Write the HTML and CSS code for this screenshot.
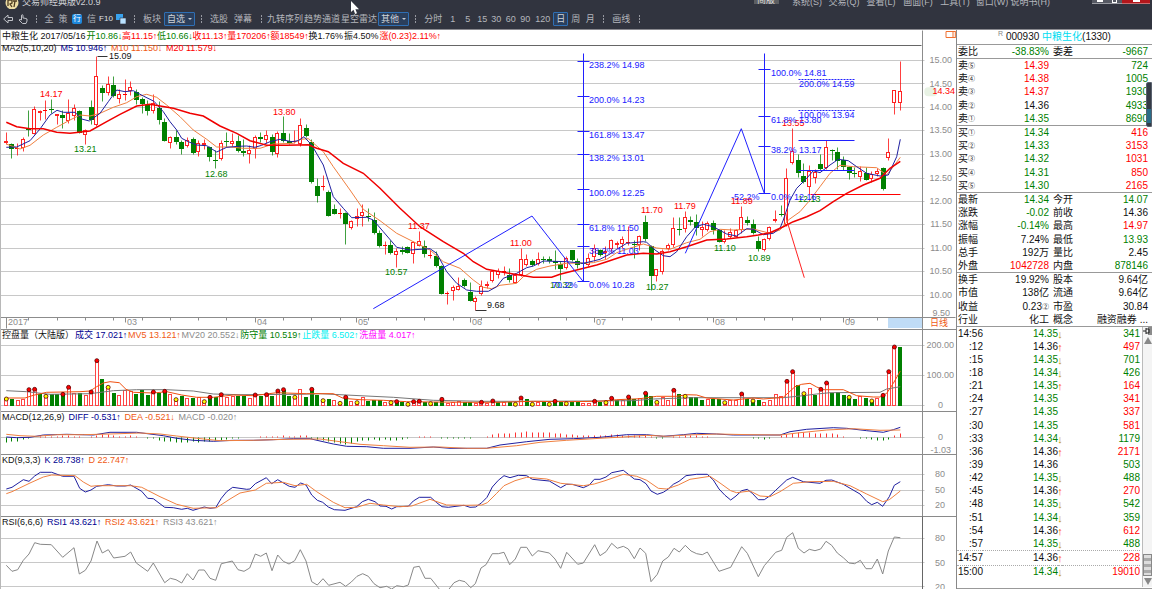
FILE: index.html
```html
<!DOCTYPE html>
<html lang="zh-CN">
<head>
<meta charset="utf-8">
<title>交易师经典版v2.0.9</title>
<link rel="stylesheet" href="styles.css">
</head>
<body>
<header class="app-header">
  <div class="titlebar">
    <svg class="logo" viewBox="0 0 14 14"><circle cx="7" cy="5" r="6.5" fill="#ecdca4"/><path d="M3 2h4v3l-2 1 2 3M8 3h4M10 3L9 9M3 2v6" stroke="#4b3a20" stroke-width="1.3" fill="none"/></svg>
    <h1 class="app-name">交易师经典版v2.0.9</h1>
    <nav class="menu">
      <span class="menu-chip">简版</span>
      <button>系统(S)</button><button>交易(Q)</button><button>查看(L)</button><button>画面(F)</button><button>工具(T)</button><button>窗口(W)</button><button>说明书(H)</button>
    </nav>
    <div class="window-buttons">
      <button class="win" aria-label="最小化"><span class="glyph-min"></span></button><button class="win" aria-label="还原"><span class="glyph-max"></span></button><button class="win win-close" aria-label="关闭"><span class="glyph-close"></span></button>
    </div>
  </div>
  <div class="toolbar">
    <button class="cell wide" aria-label="后退"><svg viewBox="0 0 10 10" width="10" height="10"><path d="M9.5 3.5H5V1L.7 5 5 9V6.5h4.500z" class="stroke"/></svg></button>
    <button class="cell wide" aria-label="手形"><svg viewBox="0 0 10 10" width="10" height="10"><path d="M3.500 6V1.200q.8-.9 1.500 0V4q2.200.1 4 1v2L8 9.500H4.500L1 6q.7-1.100 2.500 0" class="stroke"/></svg></button>
    <i class="sep"></i>
    <button class="cell">全</button><button class="cell">策</button><button class="cell"><span class="badge">行</span></button><button class="cell wide">信</button><button class="cell f10">F10</button>
    <button class="cell wide" aria-label="窗口布局"><svg viewBox="0 0 10 10" width="10" height="10"><path d="M0 0h7v6H0z" fill="#38a2ee"/><path d="M4 4h6v6H4z" fill="#b9e2ff" stroke="#31343f" stroke-width=".6"/></svg></button>
    <i class="sep"></i>
    <button class="tool">板块</button><button class="drop">自选<b></b></button>
    <i class="sep"></i>
    <button class="tool">选股</button><button class="tool">弹幕</button>
    <i class="sep"></i>
    <button class="tool long">九转序列</button><button class="tool long">趋势通道</button><button class="tool long">星空雷达</button><button class="drop">其他<b></b></button>
    <i class="sep"></i>
    <button class="tool">分时</button><button class="cell wide">1</button><button class="cell wide">5</button><button class="cell">15</button><button class="cell">30</button><button class="cell wide">60</button><button class="cell">90</button><button class="tool">120</button><button class="cell wide active">日</button><button class="cell wide">周</button><button class="cell">月</button>
    <i class="sep"></i>
    <button class="tool">画线</button>
    <i class="sep"></i>
  </div>
  <svg class="pointer" viewBox="0 0 8 13"><path d="M0 0v11l2.500-2.200L4.200 13l1.800-.8L4.400 8.200H8z" fill="#fff"/></svg>
</header>

<main class="workspace">
  <div class="charts">
    <section class="panel" data-chart="price">
      <svg></svg>
      <div class="captions">
        <p class="caption tight"><span class="blk">中粮生化 2017/05/16 </span><span class="grn">开10.86<i>↓</i></span><span class="red">高11.15<i>↑</i></span><span class="grn">低10.66<i>↓</i></span><span class="red">收11.13<i>↑</i></span><span class="red">量170206<i>↑</i></span><span class="red">额18549<i>↑</i></span><span class="blk">换1.76%</span><span class="blk">振4.50%</span><span class="red">涨(0.23)2.11%<i>↑</i></span></p>
        <p class="caption"><span class="blk">MA2(5,10,20)</span><span class="navy">M5 10.946<i>↑</i></span><span class="org">M10 11.150<i>↓</i></span><span class="red">M20 11.579<i>↓</i></span></p>
      </div>
    </section>
    <section class="panel" data-chart="volume">
      <svg></svg>
      <p class="caption snug"><span class="blk">控盘量（大陆版）</span><span class="navy">成交 17.021<i>↑</i></span><span class="org">MV5 13.121<i>↑</i></span><span class="gry">MV20 20.552<i>↓</i></span><span class="grn">防守量 10.519<i>↑</i></span><span class="cyan">止跌量 6.502<i>↑</i></span><span class="mag">洗盘量 4.017<i>↑</i></span></p>
    </section>
    <section class="panel" data-chart="macd">
      <svg></svg>
      <p class="caption"><span class="blk">MACD(12,26,9)</span><span class="navy">DIFF -0.531<i>↑</i></span><span class="org">DEA -0.521<i>↓</i></span><span class="gry">MACD -0.020<i>↑</i></span></p>
    </section>
    <section class="panel" data-chart="kd">
      <svg></svg>
      <p class="caption"><span class="blk">KD(9,3,3)</span><span class="navy">K 28.738<i>↑</i></span><span class="org">D 22.747<i>↑</i></span></p>
    </section>
    <section class="panel" data-chart="rsi">
      <svg></svg>
      <p class="caption"><span class="blk">RSI(6,6,6)</span><span class="navy">RSI1 43.621<i>↑</i></span><span class="org">RSI2 43.621<i>↑</i></span><span class="gry">RSI3 43.621<i>↑</i></span></p>
    </section>
  </div>

  <aside class="quote">
    <h2 class="stock"><sup>R</sup> 000930 <span class="cyan2">中粮生化</span>(1330)</h2>
    <table class="grid-table first"><tr><th>委比</th><td class="grn">-38.83%</td><th>委差</th><td class="grn">-9667</td></tr></table>
    <table class="grid-table book">
      <tr><th>卖<small>⑤</small></th><td class="red">14.39</td><th></th><td class="grn">724</td></tr>
      <tr><th>卖<small>④</small></th><td class="red">14.38</td><th></th><td class="grn">1005</td></tr>
      <tr><th>卖<small>③</small></th><td class="red">14.37</td><th></th><td class="grn">1930</td></tr>
      <tr><th>卖<small>②</small></th><td>14.36</td><th></th><td class="grn">4933</td></tr>
      <tr><th>卖<small>①</small></th><td class="grn">14.35</td><th></th><td class="grn">8690</td></tr>
    </table>
    <table class="grid-table book">
      <tr><th>买<small>①</small></th><td class="grn">14.34</td><th></th><td class="red">416</td></tr>
      <tr><th>买<small>②</small></th><td class="grn">14.33</td><th></th><td class="red">3153</td></tr>
      <tr><th>买<small>③</small></th><td class="grn">14.32</td><th></th><td class="red">1031</td></tr>
      <tr><th>买<small>④</small></th><td class="grn">14.31</td><th></th><td class="red">850</td></tr>
      <tr><th>买<small>⑤</small></th><td class="grn">14.30</td><th></th><td class="red">2165</td></tr>
    </table>
    <table class="grid-table stats">
      <tr><th>最新</th><td class="grn">14.34</td><th>今开</th><td class="grn">14.07</td></tr>
      <tr><th>涨跌</th><td class="grn">-0.02</td><th>前收</th><td>14.36</td></tr>
      <tr><th>涨幅</th><td class="grn">-0.14%</td><th>最高</th><td class="red">14.97</td></tr>
      <tr><th>振幅</th><td>7.24%</td><th>最低</th><td class="grn">13.93</td></tr>
      <tr><th>总手</th><td>192万</td><th>量比</th><td>2.45</td></tr>
      <tr><th>外盘</th><td class="red">1042728</td><th>内盘</th><td class="grn">878146</td></tr>
    </table>
    <table class="grid-table profile">
      <tr><th>换手</th><td>19.92%</td><th>股本</th><td>9.64亿</td></tr>
      <tr><th>市值</th><td>138亿</td><th>流通</th><td>9.64亿</td></tr>
      <tr><th>收益</th><td>0.23<small>②</small></td><th>市盈</th><td>30.84</td></tr>
      <tr><th>行业</th><td>化工</td><th>概念</th><td>融资融券 ...</td></tr>
    </table>
    <div class="ticks">
      <table class="tick-table"><tbody id="ticks"></tbody></table>
      <div class="scroll">
        <svg viewBox="0 0 9 8" class="pin"><path d="M0 4h3M3 1v6M3 2h3v4H3M6 0v8M8 0v8" stroke="#222" fill="none"/></svg>
        <span class="up"></span><span class="track"></span><span class="thumb"></span><span class="down"></span>
      </div>
    </div>
    <div class="dock"></div>
  </aside>
</main>
<script src="chart.js"></script>
</body>
</html>
```
FILE: styles.css
```css
* { box-sizing: border-box; }
html, body { height: 100%; margin: 0; }
body {
  display: flex;
  flex-direction: column;
  overflow: hidden;
  background: #fff;
  color: #111;
  font-family: "Liberation Sans", "Noto Sans CJK SC", sans-serif;
  font-size: 9px;
}
h1, h2, p { margin: 0; font-size: inherit; font-weight: normal; }
button { padding: 0; border: 0; background: none; color: inherit; font: inherit; white-space: nowrap; }

.red { color: #f00; }
.grn { color: #008000; }
.blk { color: #111; }
.navy { color: #000090; }
.org { color: #f05a14; }
.gry { color: #8c8c8c; }
.cyan { color: #00f0f0; }
.cyan2 { color: #00dcf0; }
.mag { color: #f0f; }

/* header */
.app-header {
  position: relative;
  flex: none;
  background: #31343f;
  border-bottom: 1px solid #8a8a90;
  color: #b4b6bc;
}
.titlebar { display: flex; align-items: flex-start; height: 9px; overflow: hidden; line-height: 4px; }
.logo { width: 14px; height: 14px; margin-left: 5px; margin-top: -2px; }
.app-name { margin-left: 3px; color: #d0d2d6; }
.menu { display: flex; margin-left: auto; }
.menu button { min-width: 37px; line-height: 2px; }
.menu-chip { width: 25px; height: 4px; margin-right: 10px; overflow: hidden; background: #5c5e62; color: #ddd; text-align: center; line-height: 1px; }
.window-buttons { display: flex; margin-left: 42px; margin-right: 2px; }
.win { display: grid; place-items: start center; width: 15px; height: 4px; background: #565963; border-bottom: 1px solid #9a9ca3; }
.win-close { width: 28px; background: #b3161b; border-color: #c96c6e; }
.glyph-min { width: 6px; height: 2px; background: #fff; }
.glyph-max { width: 5px; height: 3px; border: 1px solid #fff; border-top: 0; }
.glyph-close { width: 7px; height: 2px; background: #fff; }
.toolbar { display: flex; align-items: center; height: 20px; padding-bottom: 1px; line-height: 12px; }
.cell { display: grid; place-items: center; flex: none; width: 14px; height: 14px; }
.cell.wide { width: 15px; }
.tool { flex: none; padding: 0 3px; }
.tool.long { padding: 0 1px 0 0; }
.f10 { color: #e0e2e6; font-size: 8px; }
.sep { flex: none; width: 12px; height: 8px; background: repeating-linear-gradient(#9698a0 0 2px, transparent 2px 3px) center / 1px 8px no-repeat; }
.badge { width: 10px; height: 10px; border-radius: 2px; background: #1e88dc; color: #fff; font-size: 8px; line-height: 10px; }
.active, .drop { border: 1px solid #2f6fb4; border-radius: 1px; background: #2b3f5c; color: #d0d4da; }
.drop { display: flex; flex: none; align-items: center; gap: 3px; height: 14px; padding: 0 2px; }
.drop b { width: 4px; border: 2px solid transparent; border-top-color: #c8ccd2; border-bottom: 0; }
.stroke { fill: none; stroke: #c0c2c8; stroke-width: 1; }
.pointer { position: absolute; left: 30.5%; top: 1px; width: 8px; height: 13px; }

/* workspace */
.workspace { display: grid; grid-template-columns: minmax(0, 1fr) 196px; flex: 1; min-height: 0; }
.charts { display: grid; grid-template-rows: 299fr 82fr 43fr 62fr 73fr; min-height: 0; border-left: 1px solid #b8b8b8; }
.panel { display: grid; min-height: 0; box-shadow: inset 0 1px #8a8a8a; }
.panel:first-child { box-shadow: none; }
.panel > * { grid-area: 1 / 1; min-height: 0; }
.panel svg { width: 100%; height: 100%; overflow: hidden; }
.panel text { font-size: 9px; dominant-baseline: central; }
.caption { display: flex; gap: 4px; align-self: start; padding-left: 1px; line-height: 12px; white-space: nowrap; }
.caption.tight { gap: 0; }
.caption.tight .blk { margin-right: 1px; }
.caption.snug { gap: 1px; }
.caption i { display: inline-flex; justify-content: center; width: 4px; font-style: normal; }

/* quote board */
.quote { position: relative; display: flex; flex-direction: column; min-height: 0; border-left: 1px solid #888; font-size: 10px; line-height: 13px; }
.stock { height: 15px; text-align: center; border-bottom: 1px solid #999; }
.stock sup { color: #888; font-size: 7px; line-height: 1px; }
.grid-table { width: 100%; table-layout: fixed; border-collapse: collapse; border-bottom: 1px solid #999; }
.grid-table th, .grid-table td { height: 13px; padding: 0; font-weight: normal; line-height: 13px; white-space: nowrap; }
.grid-table th { width: 26px; padding-left: 1px; text-align: left; }
.grid-table th:nth-child(3) { padding-left: 4px; }
.grid-table td { text-align: right; }
.grid-table td:nth-child(2) { width: 66px; }
.grid-table td:nth-child(4) { padding-right: 4px; }
.grid-table small { font-family: "Noto Sans CJK SC", sans-serif; font-size: 7px; line-height: 1px; vertical-align: 1px; }
.book { height: 67px; }
.stats { height: 80px; }
.profile { height: 54px; }
.ticks { display: flex; flex: 1; min-height: 0; padding-bottom: 1px; border-bottom: 1px solid #999; }
.tick-table { flex: 1; height: calc(100% - 8px); border-collapse: collapse; table-layout: fixed; }
.tick-table td { padding: 0; line-height: 12px; text-align: right; }
.tick-table td:first-child { width: 26px; }
.tick-table td:nth-child(2) { width: 75px; }
.tick-table tr.mark td { border-top: 1px dotted #aaa; border-bottom: 1px dotted #aaa; }
.tick-table td.arrow { width: 4px; }
.arrow span { display: flex; justify-content: center; width: 4px; font-size: 11px; font-weight: bold; }
.up-arrow { color: #f50; }
.down-arrow { color: #c89a10; }
.scroll { display: flex; flex-direction: column; align-items: center; width: 10px; margin-left: 2px; border-left: 1px solid #bbb; background: #f4f4f4; }
.pin { width: 9px; height: 8px; }
.up, .down { width: 8px; border: 4px solid transparent; }
.up { margin-top: 2px; border-top: 0; border-bottom: 7px solid #888; }
.down { margin: 2px 0; border-bottom: 0; border-top: 7px solid #888; }
.track { flex: 1; }
.thumb { width: 9px; height: 22px; border: 1px solid #888; background: repeating-linear-gradient(#ddd 0 3px, #aaa 3px 6px); }
.dock { position: absolute; top: 52px; right: 0; width: 6px; height: 45px; border: 1px solid #59616e; border-radius: 2px 0 0 2px; background: linear-gradient(#353b46 60%, #2a6c88 60% 92%, #353b46 92%); }
```
FILE: chart.js
```js
// Plot coordinates are thirds of a CSS pixel at the default window size; draw() rescales them.
const PITCH = 16.97, FIRST = 19, DIVIDER = 2768, WIDTH = 2865;
const RED = '#f00', GREEN = '#008000', NAVY = '#2020a0', ORANGE = '#f08040', BLUE = '#2020ff', GREY = '#8c8c8c';

// colour, high, body top, body bottom, low
const candles = `R246,274,279,282 G280,281,297,325 R280,293,298,317 R262,266,295,304 G182,234,240,258 R170,176,251,254 R180,182,190,212 R152,180,182,208 G148,178,180,190 R192,193,197,222
G181,195,203,236 R147,188,213,220 R163,175,199,212 G180,182,248,250 R238,241,254,282 G150,172,210,222 R18,79,225,228 G105,114,130,154 R78,102,128,136 G78,104,139,143
R118,132,146,160 R87,131,135,150 R94,111,122,136 G118,126,150,162 G142,146,163,190 G150,165,182,195 R133,158,182,190 G155,174,211,222 G205,216,272,275 R258,262,280,296
G242,260,275,284 G272,277,297,312 R262,271,289,292 G262,266,310,312 R270,280,306,318 R268,280,285,298 G290,292,320,334 G300,330,334,355 R270,280,326,330 G248,273,277,292
R250,274,282,288 G256,273,302,306 G268,304,308,318 R285,300,311,340 R256,260,298,324 G248,262,266,278 R240,254,269,280 G254,262,306,316 R245,248,311,323 G200,250,272,276
G250,272,280,284 R240,272,276,280 R206,226,282,288 G222,233,257,262 G268,276,395,400 G384,408,437,458 R376,409,412,420 G420,425,497,500 G464,478,491,493 R475,488,492,506
G488,489,523,582 R510,514,533,538 R475,499,508,530 R462,487,497,530 G474,498,502,515 G486,510,549,552 G540,549,589,592 R575,586,589,612 G572,585,609,612 R595,603,615,653
G590,601,606,614 G590,591,608,610 R575,577,612,641 R543,573,587,590 G572,589,612,622 R600,615,619,624 G604,619,649,652 G645,648,731,734 R725,728,732,763 R705,712,724,750
R682,707,719,722 G684,690,707,712 G698,726,752,755 R740,745,755,780 R690,709,733,736 R695,701,708,716 R660,664,692,698 R656,664,674,684 R648,662,665,676 G656,675,689,696
R670,675,698,700 R594,628,675,680 R613,628,645,650 G628,634,644,648 R608,628,641,646 G620,626,630,640 G620,626,632,640 G600,632,640,658 G635,643,658,690 R618,623,655,658
G600,601,630,634 G625,632,645,655 G636,638,641,648 R610,625,645,650 R582,595,622,635 G598,600,614,620 R590,602,610,628 R568,569,598,610 R574,578,584,595 R558,568,582,595
R530,576,578,586 G570,582,586,625 R556,559,585,600 G495,515,567,574 G585,587,677,720 R658,658,678,695 R598,602,665,673 R580,586,598,602 R501,533,586,592 G501,537,541,555
R483,502,536,548 G500,510,517,526 G492,517,533,555 R515,532,541,558 R515,520,541,543 G510,519,540,552 G540,541,575,578 R540,567,575,579 R535,545,562,566 R538,539,560,562
R468,502,539,550 G500,511,518,525 G508,523,548,554 G560,573,596,605 R564,568,601,603 R530,532,568,572 R480,508,512,516 G465,491,495,500 R354,385,525,530 R235,302,340,344
G313,330,369,383 G340,378,397,399 R346,364,410,432 R358,367,383,400 G313,343,357,360 R272,292,354,358 G298,299,304,332 G293,306,333,358 G318,330,350,362 G348,351,368,387
G353,369,372,382 R348,362,382,394 G353,369,389,391 R363,372,388,398 R355,364,372,380 G351,354,417,420 R266,307,325,332 R120,121,159,193 R33,123,160,180`.split(/\s+/);

// colour, bar top, optional marker (r = red, y = yellow)
const volumes = `R222y G222 R226 R221 R194r R193r G206 R214y G208 G208 G208r R187r R204 G203 R210 R201r R107r G163 R187y G204 R211 R195 R197 G208 G195 G211 R201r G205 G199r R208
R224y G214 R220 G218 R217 R230y G217r G217 R209r R215 R212 G212 G212 R218 R210r G214 R209r G212 R198r G194r G212 R217y R193 G216 G193r G209 R227y G222 R226 R235y
G217r R227 R233y R217 G228 G226 G226 R230 R233y G230r G232 R238y R230r R229r G231 R236y G230 G223r R234 R230 R229 G232 G231 R233 R232r R234 R228r G230 R231 G231
R238y R219r G223 G238y R232 G231 R238y G229r G231 R236y G231 G231 R235 R233 R229r G232 R233y R220r G224 R225 G216r G222 R220 G205r G212 R232y R216 R224 R196r G207
R214y G217 G217 G225 R222 G221 G221 R233y R226 R225 R207r G222 G228y G224 R232 R226 R207 R212 R169r R140r G180 G206y R190 G210 R193r R174r G203 G202 G210 G217y
G222 R214 G218 G228y R219 G211r R140r R66r G66`.split(/\s+/);

const histogram = [-15,-13,-11,-7,-2,0,3,4,4,4,5,5,3,2,-1,2,6,8,9,6,4,4,5,3,0,-2,-4,-8,-12,-13,-15,-15,-14,-13,-14,-12,-11,-8,-8,-5,-3,-2,0,0,1,4,4,3,4,5,3,4,7,6,-3,-6,-9,-13,-15,-18,-20,-17,-13,-10,-8,-7,-8,-7,-8,-9,-7,-4,-1,2,3,3,1,-2,-3,-2,-3,-2,-2,-1,1,3,8,12,13,12,14,16,17,15,16,15,14,12,11,9,9,7,6,6,7,7,7,8,8,7,7,6,6,5,3,-2,-2,0,3,4,6,6,5,4,3,1,0,0,0,0,1,1,-2,-4,-5,-3,0,5,10,13,15,15,15,13,12,12,11,8,4,1,-1,-3,-4,-6,-8,-10,-6,7,13];

const lines = {
  ma5: '19,292 50,291 90,272 120,237 150,195 171,181 190,187 225,187 245,207 268,213 300,190 325,155 350,120 375,125 400,122 430,138 462,154 490,185 510,215 530,240 545,265 565,275 590,285 620,287 650,306 680,292 715,289 740,288 765,292 785,286 810,275 840,268 875,275 895,272 912,260 935,285 970,345 1000,440 1030,475 1055,503 1100,502 1120,510 1150,545 1190,592 1230,600 1290,596 1310,610 1340,665 1370,700 1400,720 1430,724 1465,724 1490,710 1510,685 1550,670 1580,653 1600,648 1630,633 1700,635 1750,640 1780,633 1800,628 1830,612 1850,598 1880,580 1930,575 1940,577 1965,600 1990,617 2010,620 2030,605 2060,560 2085,532 2110,523 2140,530 2180,552 2210,558 2240,536 2260,538 2290,554 2320,550 2340,535 2350,510 2370,450 2390,415 2420,385 2440,362 2460,368 2490,345 2515,328 2545,332 2570,350 2600,370 2640,378 2665,375 2690,320 2701,268',
  ma10: '19,282 60,297 90,286 130,255 170,232 210,210 240,195 270,198 300,190 340,172 380,158 410,140 440,133 470,142 500,165 540,200 580,240 620,268 650,291 690,291 730,295 780,295 820,282 880,280 900,268 925,266 970,305 1000,350 1050,420 1090,478 1140,512 1190,550 1240,575 1290,600 1330,635 1380,655 1420,690 1450,712 1475,716 1500,706 1550,700 1570,680 1610,658 1650,648 1700,640 1780,638 1820,628 1850,608 1880,598 1930,582 1970,594 2010,598 2060,578 2100,568 2130,545 2160,538 2200,540 2260,537 2310,550 2340,540 2365,510 2400,485 2430,450 2460,410 2490,370 2520,346 2560,350 2630,353 2660,375 2680,350 2701,322',
  ma20: '19,217 50,230 90,236 130,236 170,247 210,250 270,243 320,215 360,193 410,168 450,163 520,175 570,190 610,198 660,228 710,250 750,272 800,286 860,286 925,284 950,295 985,305 1030,340 1090,370 1140,415 1200,475 1260,530 1330,575 1390,610 1420,635 1460,658 1540,672 1600,682 1655,682 1680,673 1730,660 1790,645 1820,635 1880,615 1930,610 1970,612 2010,605 2060,590 2120,570 2180,567 2240,560 2275,555 2310,548 2350,530 2380,515 2420,500 2460,482 2500,455 2540,430 2590,405 2640,385 2670,355 2701,334',
  mv5: '19,219 75,219 100,211 140,202 240,200 270,198 290,185 310,174 330,170 358,173 378,193 400,202 460,204 500,200 545,210 590,217 640,217 700,210 760,212 830,203 920,206 1000,206 1030,220 1080,224 1150,226 1220,230 1300,231 1400,232 1500,232 1600,229 1700,230 1800,229 1850,224 1920,221 1970,214 2030,214 2060,209 2090,210 2120,219 2200,225 2260,219 2290,222 2350,217 2385,185 2405,178 2430,175 2450,186 2460,190 2470,194 2530,194 2570,212 2620,216 2640,216 2660,205 2680,175 2701,138',
  mv20: '19,197 80,200 150,208 270,206 340,197 410,194 500,194 580,198 640,207 720,209 900,208 960,206 1080,212 1180,217 1300,226 1450,229 1600,229 1900,227 1960,222 2020,220 2080,218 2350,218 2410,212 2450,207 2490,203 2640,202 2660,192 2701,185',
  diff: '19,336 50,338 90,337 130,330 200,328 280,330 330,322 410,322 450,327 490,332 530,340 580,346 640,349 700,346 760,346 820,344 880,341 930,341 960,348 1000,357 1040,364 1100,365 1150,370 1230,370 1300,366 1350,370 1460,370 1500,360 1580,350 1650,343 1720,341 1800,337 1840,333 1880,329 1940,329 1990,334 2050,329 2090,325 2150,327 2200,330 2340,330 2370,320 2420,313 2500,308 2540,310 2600,317 2650,322 2680,314 2701,307',
  dea: '19,328 60,332 110,334 170,329 250,329 330,327 420,324 480,327 530,333 590,340 660,347 760,346 860,343 960,342 1020,350 1080,358 1150,362 1230,367 1320,366 1400,370 1460,370 1550,362 1620,352 1700,346 1800,340 1870,336 1940,331 2000,334 2060,330 2150,327 2250,329 2340,330 2400,323 2480,315 2560,311 2640,316 2701,315',
  k: '19,492 36,487 70,464 87,469 104,453 121,442 155,442 188,454 222,454 239,490 256,501 273,495 290,484 325,479 350,483 375,483 392,480 425,499 443,520 460,521 494,547 520,548 545,553 562,550 579,556 613,546 630,550 647,548 664,520 680,500 698,487 740,493 750,492 766,476 799,458 815,476 833,464 868,484 885,487 902,474 918,480 935,510 952,526 968,532 985,546 1003,554 1035,556 1070,545 1087,530 1105,523 1125,530 1140,543 1158,544 1175,552 1190,545 1225,544 1240,528 1258,517 1292,517 1310,533 1326,545 1345,547 1392,541 1410,547 1427,546 1445,533 1461,517 1477,486 1495,466 1512,452 1530,458 1555,451 1580,452 1597,463 1648,468 1682,488 1700,478 1717,478 1750,488 1768,480 1783,463 1800,463 1818,456 1835,443 1870,436 1903,462 1920,464 1938,476 1953,498 1972,508 1990,502 2005,492 2020,478 2037,469 2058,452 2090,448 2122,448 2140,465 2157,492 2175,511 2192,525 2208,513 2225,497 2242,493 2258,506 2275,524 2293,524 2310,512 2327,496 2360,465 2378,457 2410,470 2460,475 2478,466 2495,465 2530,478 2580,507 2600,529 2615,539 2632,532 2648,544 2668,515 2683,481 2701,470',
  d: '19,506 36,500 90,474 130,456 155,450 225,452 250,471 273,484 290,482 392,482 425,487 480,515 530,538 580,550 650,548 690,522 720,504 766,495 799,475 850,472 885,482 920,478 950,500 1000,532 1035,548 1070,547 1110,535 1150,540 1200,545 1235,543 1290,523 1340,540 1400,541 1445,540 1462,533 1490,505 1512,482 1545,467 1580,457 1640,462 1682,475 1750,482 1783,477 1815,467 1870,448 1910,454 1940,466 1975,490 2000,492 2035,480 2070,463 2130,454 2157,472 2192,497 2210,503 2250,498 2280,513 2310,515 2340,500 2380,475 2430,470 2500,469 2550,482 2600,507 2648,530 2668,524 2701,498',
  rsi: '19,721 36,739 53,734 70,706 87,687 104,653 121,658 154,659 188,697 222,668 238,747 256,736 273,708 291,648 307,684 325,674 341,699 375,694 392,681 409,714 443,739 460,714 494,773 511,760 528,764 545,774 562,746 579,765 596,735 613,735 630,760 647,766 664,716 697,708 714,734 732,739 749,729 766,687 782,694 799,684 816,737 833,690 850,709 867,717 884,707 901,674 918,708 935,770 952,780 969,761 986,781 1020,772 1037,784 1054,771 1071,754 1088,746 1105,754 1122,776 1140,788 1160,784 1175,792 1190,782 1210,785 1225,780 1241,727 1258,724 1275,760 1292,760 1320,795 1345,795 1362,773 1378,766 1395,770 1412,788 1426,776 1443,729 1458,719 1477,686 1495,686 1512,682 1529,719 1546,702 1562,667 1580,667 1597,693 1614,677 1648,684 1665,702 1682,730 1700,682 1733,718 1750,714 1784,659 1800,692 1818,680 1835,655 1852,670 1870,664 1885,672 1903,701 1920,669 1937,685 1953,770 1972,748 1988,708 2005,696 2022,670 2038,681 2056,661 2073,678 2090,686 2107,689 2122,681 2157,739 2192,727 2225,665 2242,685 2275,755 2293,722 2327,682 2345,676 2360,637 2378,623 2395,670 2412,684 2428,673 2445,677 2462,672 2478,649 2495,661 2512,684 2530,698 2547,714 2564,716 2581,706 2598,731 2615,731 2632,702 2648,747 2665,678 2683,636 2701,638'
};

const labels = [
  ['15.09', 327, 19, '#111'], ['14.17', 121, 133, RED], ['13.21', 223, 297, GREEN], ['12.68', 615, 371, GREEN],
  ['13.80', 818, 185, RED], ['11.37', 1225, 527, RED], ['10.57', 1156, 667, GREEN], ['11.00', 1530, 579, RED],
  ['9.68', 1462, 765, '#111'], ['10.32', 1650, 704, GREEN], ['70.2%', 1656, 706, BLUE], ['11.70', 1922, 480, RED],
  ['11.79', 2023, 468, RED], ['11.10', 2142, 594, GREEN], ['10.27', 1938, 711, GREEN], ['-52.2%', 2193, 441, BLUE],
  ['11.89', 2194, 453, RED], ['10.89', 2243, 623, GREEN], ['13.55', 2347, 219, RED], ['12.13', 2395, 447, GREEN],
  ['238.2% 14.98', 1767, 45, BLUE], ['200.0% 14.23', 1767, 150, BLUE], ['161.8% 13.47', 1767, 256, BLUE], ['138.2% 13.01', 1767, 323, BLUE],
  ['100.0% 12.25', 1767, 429, BLUE], ['61.8% 11.50', 1767, 535, BLUE], ['38.2% 11.03', 1767, 603, BLUE], ['0.0% 10.28', 1767, 706, BLUE],
  ['100.0% 14.81', 2312, 68, BLUE], ['200.0% 14.59', 2397, 103, BLUE], ['100.0% 13.94', 2397, 196, BLUE], ['61.8% 13.80', 2312, 211, BLUE],
  ['38.2% 13.17', 2312, 299, BLUE], ['0.0% 12.16', 2312, 440, BLUE]
];

function canvas(name, origin, units) {
  const svg = document.querySelector(`[data-chart="${name}"] svg`);
  const box = svg.getBoundingClientRect();
  const sx = box.width / WIDTH, sy = box.height / units;
  const X = v => v * sx - 1, Y = v => (v - origin) * sy;
  const snap = v => Math.floor(v) + 0.5;
  let out = '';
  return {
    X, Y, add(s) { out += s; },
    seg(x1, y1, x2, y2, c, extra = '') {
      const straight = x1 === x2 || y1 === y2, f = straight ? snap : v => v;
      out += `<line x1="${f(X(x1))}" y1="${f(Y(y1))}" x2="${f(X(x2))}" y2="${f(Y(y2))}" stroke="${c}" ${extra}/>`;
    },
    rect(x, y, w, h, fill) {
      const l = Math.round(X(x)), t = Math.round(Y(y)), r = Math.round(X(x + w)), b = Math.max(t + 1, Math.round(Y(y + h)));
      out += `<rect x="${l}" y="${t}" width="${r - l}" height="${b - t}" fill="${fill}"/>`;
    },
    line(points, c, w = 1) {
      const p = points.split(' ').map(q => { const [a, b] = q.split(',').map(Number); return X(a).toFixed(1) + ',' + Y(b).toFixed(1); }).join(' ');
      out += `<polyline points="${p}" fill="none" stroke="${c}" stroke-width="${w}"/>`;
    },
    text(t, x, y, c, anchor = 'start') { out += `<text x="${Math.round(X(x))}" y="${Math.round(Y(y))}" fill="${c}" text-anchor="${anchor}">${t}</text>`; },
    rows(ys) { ys.forEach(y => this.seg(0, y, DIVIDER + 5, y, '#c8c8c8')); },
    done() { svg.innerHTML = out; }
  };
}

function price() {
  const c = canvas('price', -60, 897);
  const grid = [31, 101, 172, 241, 313, 384, 454, 523, 595, 664, 736];
  c.rows(grid);
  c.seg(0, 802, WIDTH, 802, GREY);
  c.rect(2665, 803, 103, 31, '#c0dcf6');
  candles.forEach((s, i) => {
    const [hi, top, bot, lo] = s.slice(1).split(',').map(Number), x = FIRST + i * PITCH, up = s[0] === 'R';
    c.seg(x, hi, x, lo, up ? RED : GREEN, 'stroke-opacity=".75"');
    const left = Math.floor(c.X(x)) - 2, t = Math.round(c.Y(top)), b = Math.max(t + 1, Math.round(c.Y(bot)));
    if (up && b - t > 1) c.add(`<rect x="${left + .5}" y="${t + .5}" width="3" height="${b - t - 1}" fill="#fff" stroke="#f22"/>`);
    else c.add(`<rect x="${left}" y="${t}" width="${up ? 4 : 5}" height="${b - t}" fill="${up ? RED : GREEN}"/>`);
  });
  c.line(lines.ma10, ORANGE); c.line(lines.ma5, NAVY); c.line(lines.ma20, '#f00000', 1.5);
  c.seg(291, 18, 322, 18, '#333'); c.seg(1427, 780, 1458, 780, '#333');
  c.line('1120,776 1596,498 1750,695', BLUE);
  c.line('2056,610 2224,236 2293,430', BLUE);
  c.seg(1750, 10, 1750, 695, BLUE); c.seg(2293, 10, 2293, 430, BLUE);
  [34, 140, 244, 312, 419, 524, 590, 695].forEach(y => c.seg(1732, y, 1768, y, BLUE));
  [58, 200, 290, 430].forEach(y => c.seg(2275, y, 2311, y, BLUE));
  [88, 181].forEach(y => c.seg(2394, y, 2562, y, BLUE, 'stroke-dasharray="2 1"'));
  [271, 361].forEach(y => c.seg(2394, y, 2562, y, BLUE));
  c.seg(2430, 433, 2700, 433, RED);
  c.line('2358,490 2360,510 2413,683', '#f22');
  labels.forEach(l => c.text(...l));
  for (let i = 4; i < 159; i += 5) c.seg(FIRST + i * PITCH, 802, FIRST + i * PITCH, 811, GREY);
  [['2017', 19], ['03', 376], ['04', 766], ['05', 1070], ['06', 1412], ['07', 1783], ['08', 2140], ['09', 2530]].forEach(([t, x]) => {
    c.seg(x, 802, x, t === '2017' ? 835 : 818, GREY); c.text(t, x + 5, 817, GREY);
  });
  c.seg(DIVIDER, -60, DIVIDER, 840, GREY);
  grid.forEach((y, i) => c.text((15 - i / 2).toFixed(2), 2857, y, GREY, 'end'));
  c.text('9.50', 2850, 788, GREY, 'end');
  c.add(`<rect x="${c.X(2773)}" y="${c.Y(112)}" width="13" height="9" rx="4" fill="#e8f2e4"/>`);
  c.text('14.34', 2866, 124, RED, 'end');
  c.text('日线', 2791, 820, '#f05a14');
  c.add(`<path d="M${c.X(2838)} 1.500h7v6h-7zM${c.X(2866)} 1v7M${c.X(2838) + 7} 1.500h2M${c.X(2838) + 7} 7.500h2" fill="none" stroke="#f07030"/>`);
  c.seg(0, -14, 2763, -14, '#666');
  c.done();
}

function volume() {
  const c = canvas('volume', 12, 246);
  c.rows([61, 151, 240]);
  volumes.forEach((s, i) => {
    const x = FIRST + i * PITCH, y = parseInt(s.slice(1), 10);
    const l = Math.round(c.X(x)) - 2, t = Math.round(c.Y(y)), h = Math.max(1, Math.round(c.Y(240)) - t);
    c.add(s[0] === 'R' ? `<rect x="${l + .5}" y="${t + .5}" width="3" height="${h}" fill="#fff" stroke="#f44"/>` : `<rect x="${l}" y="${t}" width="4" height="${h + 1}" fill="${GREEN}"/>`);
  });
  c.line(lines.mv20, '#777'); c.line(lines.mv5, '#f05010');
  volumes.forEach((s, i) => {
    const m = s.slice(-1);
    if (m === 'r' || m === 'y') c.add(`<circle cx="${c.X(FIRST + i * PITCH)}" cy="${c.Y(parseInt(s.slice(1), 10))}" r="2" fill="${m === 'r' ? '#f00' : '#ff0'}" stroke="#500" stroke-width=".8"/>`);
  });
  c.seg(DIVIDER, 0, DIVIDER, 270, GREY);
  c.text('200.00', 2862, 61, GREY, 'end'); c.text('100.00', 2862, 151, GREY, 'end'); c.text('0', 2828, 240, GREY, 'end');
  c.done();
}

function macd() {
  const c = canvas('macd', 258, 129);
  c.rows([337]);
  histogram.forEach((v, i) => v && c.seg(FIRST + i * PITCH, 337, FIRST + i * PITCH, 337 - v, v > 0 ? '#f33' : GREEN));
  c.line(lines.diff, NAVY); c.line(lines.dea, ORANGE);
  c.seg(DIVIDER, 250, DIVIDER, 400, GREY);
  c.text('0', 2828, 337, GREY, 'end'); c.text('-1.03', 2852, 376, GREY, 'end');
  c.done();
}

function bands(name, origin, units, ys, series) {
  const c = canvas(name, origin, units);
  c.rows(ys);
  series.forEach(([p, col]) => c.line(p, col));
  c.seg(DIVIDER, origin, DIVIDER, origin + units, name === 'rsi' ? '#666' : GREY);
  ys.forEach((y, i) => c.text([80, 50, 20][i], 2836, y, GREY, 'end'));
  c.done();
}

function draw() {
  price(); volume(); macd();
  bands('kd', 387, 186, [447, 496, 541], [[lines.k, NAVY], [lines.d, ORANGE]]);
  bands('rsi', 573, 219, [640, 713, 785], [[lines.rsi, '#888']]);
}

// time, price, direction, volume; price colour g/k, volume colour g/r
const ticks = `14:56 14.35 d 341 g g|:12 14.36 u 497 k r|:15 14.35 d 701 g g|:18 14.34 d 426 g g|:21 14.35 u 164 g r|:24 14.35 - 341 g r|:27 14.35 - 337 g r|:30 14.35 - 581 g r|:33 14.34 d 1179 g g|:36 14.36 u 2171 k r|:39 14.36 - 503 k g|:42 14.35 d 488 g g|:45 14.36 u 270 k r|:48 14.35 d 542 g g|:51 14.34 d 359 g g|:54 14.36 u 612 k r|:57 14.35 d 488 g g|14:57 14.36 u 228 k r|15:00 14.34 d 19010 g r`;
const tone = { g: 'grn', r: 'red', k: 'blk' };
document.getElementById('ticks').innerHTML = ticks.split('|').map(row => {
  const [time, p, dir, v, pc, vc] = row.split(' ');
  const arrow = dir === 'u' ? '<span class="up-arrow">↑</span>' : dir === 'd' ? '<span class="down-arrow">↓</span>' : '';
  return `<tr${time === '14:57' ? ' class="mark"' : ''}><td>${time}</td><td class="${tone[pc]}">${p}</td><td class="arrow">${arrow}</td><td class="${tone[vc]}">${v}</td></tr>`;
}).join('');

draw();
window.addEventListener('resize', draw);
```
